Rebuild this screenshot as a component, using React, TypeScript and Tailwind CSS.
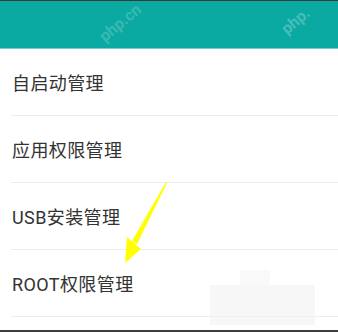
import React from 'react';

const items = ['自启动管理', '应用权限管理', 'USB安装管理', 'ROOT权限管理'];

const Row: React.FC<{ label: string }> = ({ label }) => (
    <div className="h-[67px] pl-[11px] flex flex-col">
        <div className="flex-1 flex items-center pl-px pt-[3px] text-[18px] text-[#333333] tracking-[0.4px]">
            {label}
        </div>
        <div className="h-px bg-[#ececec]" />
    </div>
);

export default function App() {
    return (
        <div
            className="relative w-[338px] h-[332px] bg-white overflow-hidden flex flex-col"
            style={{ fontFamily: 'Roboto, "Noto Sans CJK SC", sans-serif' }}
        >
            <div className="h-px bg-[#3a3a3a]" />
            <div className="relative h-[47px] bg-[#0aa9a1] overflow-hidden">
                <span className="absolute left-[96px] top-[14px] -rotate-[40deg] text-[16px] leading-none font-bold text-white/20">php.cn</span>
                <span className="absolute left-[280px] top-[12px] -rotate-[40deg] text-[16px] leading-none font-bold text-white/25">php.</span>
            </div>
            <div className="h-px bg-[#6fd0cb]" />
            <div className="flex flex-col">
                {items.map(label => (
                    <Row key={label} label={label} />
                ))}
            </div>
            <div className="flex-1" />
            <div className="h-[2px] bg-[#3d3d3d]" />

            {/* yellow arrow */}
            <svg className="absolute left-0 top-0" width="338" height="332" viewBox="0 0 338 332">
                <polygon points="166,182 167,183 137,244 132,241" fill="#ffff00" />
                <polygon points="125,263 127,237 141,249" fill="#ffff00" />
            </svg>

            {/* blurred patch */}
            <div className="absolute left-[210px] top-[285px] w-[105px] h-[40px] bg-[#f4f4f4]/70" />
            <div className="absolute left-[240px] top-[270px] w-[30px] h-[15px] bg-[#f7f7f7]/70" />
        </div>
    );
}
